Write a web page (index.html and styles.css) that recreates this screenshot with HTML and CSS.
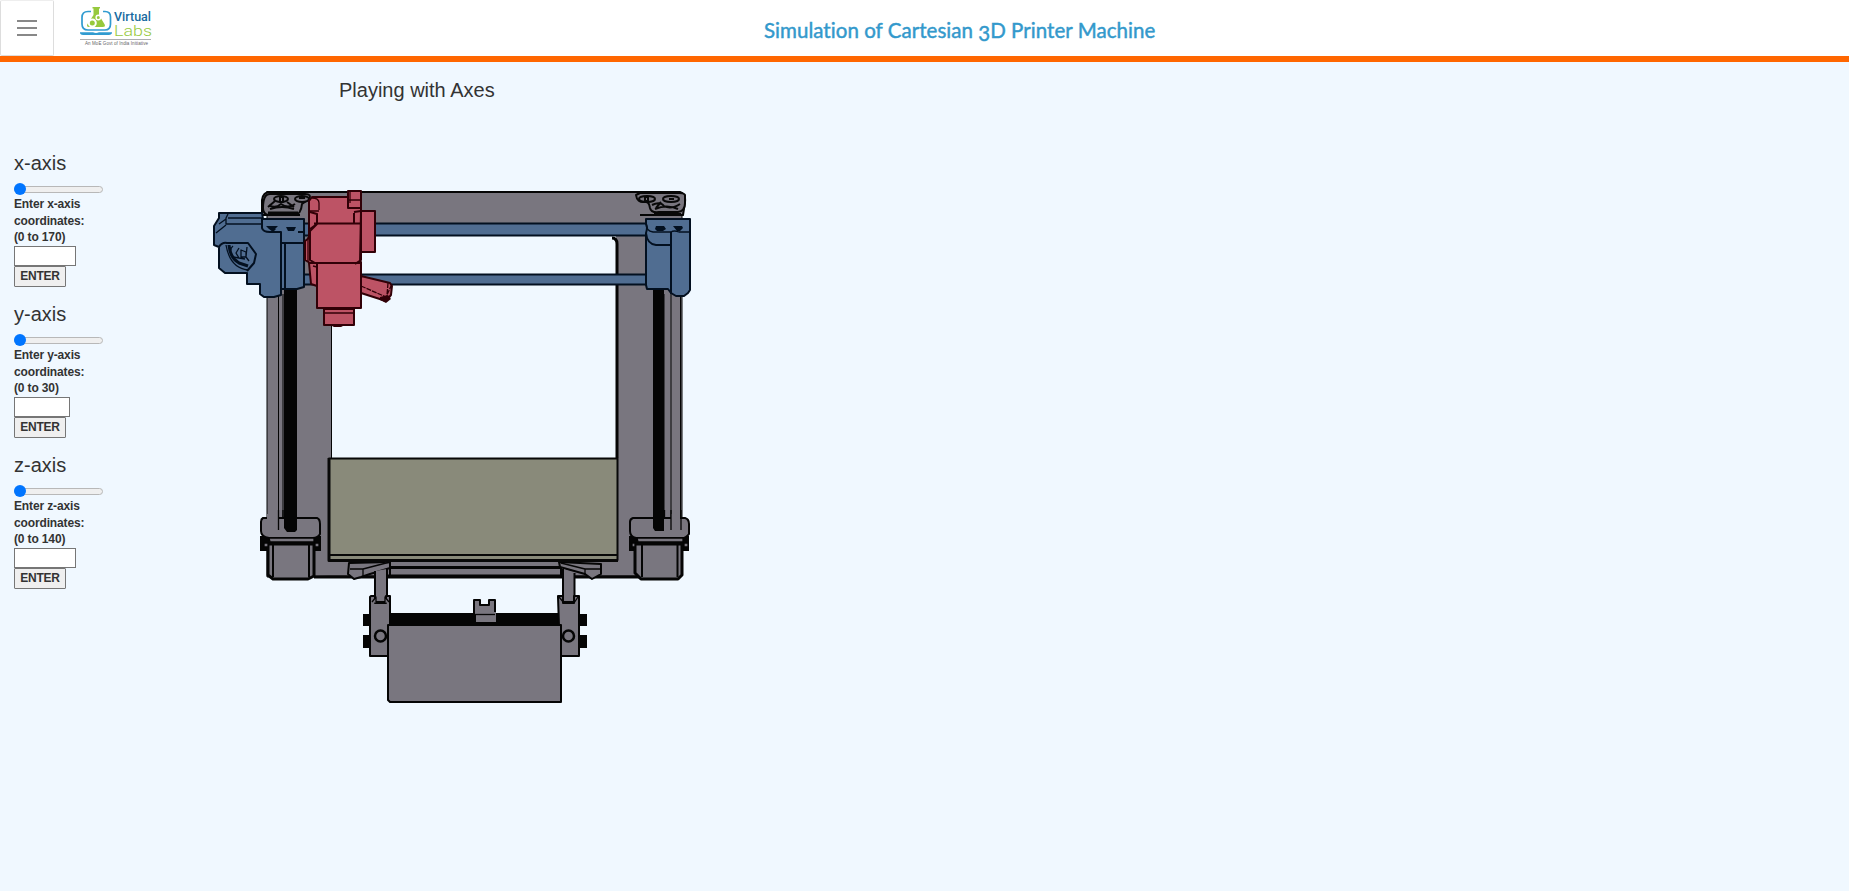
FILE: index.html
```html
<!DOCTYPE html>
<html lang="en">
<head>
<meta charset="utf-8">
<title>Simulation of Cartesian 3D Printer Machine</title>
<link rel="stylesheet" href="styles.css">
</head>
<body>
<header class="topbar">
  <button class="menu" aria-label="Menu"><span></span><span></span><span></span></button>
  <svg class="logo" viewBox="80 6 74 42" width="74" height="42" role="img" aria-label="Virtual Labs">
    <path d="M91 11.5h-3q-6 0-6 6v6.500q0 6 6 6h17q5.500 0 5.500-6v-7q0-5.500-5.500-5.500h-2" fill="none" stroke="#309bd0" stroke-width="1.700"/>
    <path d="M80 32.300h13q3 1.500 6 0h13v1q-1 1.700-3 1.700H83q-2.500 0-3-1.700z" fill="#309bd0"/>
    <path d="M92.500 7h7.500v1.500h-1v6.500l5.700 9.500q1 2.500-2 2.500H89q-3-.2-1.500-3l6-9V8.500h-1z" fill="#96c93d"/>
    <circle cx="92.300" cy="23" r="3.500" fill="#96c93d" stroke="#fff" stroke-width="2"/>
    <circle cx="98.300" cy="17.500" r="2.200" fill="#96c93d" stroke="#fff" stroke-width="1.400"/>
    <text class="logo-virtual" x="114" y="20.800" textLength="37" lengthAdjust="spacingAndGlyphs">Virtual</text>
    <text class="logo-labs" x="114" y="36" textLength="38" lengthAdjust="spacingAndGlyphs">Labs</text>
    <path d="M80 39.500h71" stroke="#999" stroke-width=".8"/>
    <text class="logo-note" x="85" y="44.800" textLength="63">An MoE Govt of India Initiative</text>
  </svg>
  <h1 class="title">Simulation of Cartesian <span class="oldstyle">3</span>D Printer Machine</h1>
</header>
<main class="content">
  <h2 class="subtitle">Playing with Axes</h2>
  <div class="workspace">
    <div class="controls">
      <section class="axis">
        <h3>x-axis</h3>
        <input class="slider" type="range" min="0" max="170" value="0">
        <label>Enter x-axis<br>coordinates:<br>(0 to 170)</label>
        <input class="value" type="text">
        <button class="enter">ENTER</button>
      </section>
      <section class="axis">
        <h3>y-axis</h3>
        <input class="slider" type="range" min="0" max="30" value="0">
        <label>Enter y-axis<br>coordinates:<br>(0 to 30)</label>
        <input class="value value-short" type="text">
        <button class="enter">ENTER</button>
      </section>
      <section class="axis">
        <h3>z-axis</h3>
        <input class="slider" type="range" min="0" max="140" value="0">
        <label>Enter z-axis<br>coordinates:<br>(0 to 140)</label>
        <input class="value" type="text">
        <button class="enter">ENTER</button>
      </section>
    </div>
    <svg class="printer" viewBox="205 180 500 530" width="500" height="530">
      <!-- frame -->
      <g class="frame">
        <path class="thin" d="M267 215V577L328 576H640L682 560V215z"/>
        <path class="thick" d="M267 192H680Q686 194 685 202L683 215H262V200Q263 192 270 192z"/>
        <path class="fill" d="M300 200H640V230H300z"/>
        <path class="hole" d="M332 235H616V458H332z"/>
        <path class="thin" d="M331.500 325V458"/>
        <path class="heavy line" d="M612 238Q617 238 617 244V458"/>
        <path class="heavy line" d="M314 577H640"/>
        <path d="M278.500 294V529M283 294V520M664 294V529M671 294V529M680.500 294V525" class="thin"/>
        <path class="solid" d="M284 290H297V530Q297 532 293 532H288Q284 531 284 522zM653 290H664V530Q664 532 660 532H655Q653 531 653 527z"/>
      </g>
      <!-- frame corner fittings -->
      <g class="fitting">
        <path class="thick" d="M263 208Q263 194 270 194H305Q312 194 309 199L302 204Q301 215 294 215H268Q263 214 263 208z"/>
        <ellipse class="thick" cx="281" cy="199" rx="7" ry="3"/><ellipse class="thick" cx="302" cy="199" rx="7" ry="3"/>
        <path class="thick" d="M280 197h3v5h-3zM299 198h6M269 205q6 4 12-1q7 5 14 0M270 209q12-4 24 0M275 201l-7 6M287 202l7 5"/>
        <path d="M268 213H298" class="heavy"/>
        <path class="thick" d="M636 195Q637 203 645 202Q649 201 650 208Q651 213 659 212H678Q685 211 685 203V195Q684 193 679 193H640z"/>
        <ellipse class="thick" cx="647" cy="199" rx="8" ry="3"/><ellipse class="thick" cx="671" cy="199" rx="8" ry="3"/>
        <path class="thick" d="M645 197h3v4h-3zM669 199h5M652 205q8-4 12 1q7 4 16-2M655 209q12-5 23 0M661 202l-5 6"/>
        <path d="M654 214.500H681" class="heavy"/>
      </g>
      <!-- lower motors -->
      <g class="frame">
        <path class="solid" d="M260 536h61v15h-61zM629 536h60v15h-60z"/>
        <path d="M268 544H314V576L308 579H273L268 575zM635 544H682V575L678 579H641L635 573z" class="heavy"/>
        <path class="thick line" d="M273 545V577M309 545V577M642 545V577M677.500 545V577"/>
        <path class="thick" d="M263 518H317Q320 519 320 524V534Q318 538 313 538H269Q261 537 261 531V522Q261 519 263 518z"/>
        <path class="thick" d="M633 518H685Q689 519 689 524V534Q686 538 682 538H636Q630 537 630 531V522Q630 519 633 518z"/>
        <path d="M269 538H314V542H270zM637 538H683V542H638z"/>
        <path d="M264 543h4v4h-4zM315 543h4v4h-4zM632 543h3v4h-3zM684 543h4v4h-4z"/>
        <path class="fill" d="M267 514H279V529H267zM671 514H680V529H671z"/>
        <path class="line" d="M278.500 510V530M283 510V518M664.500 510V518M671 510V530M681 510V530"/>
        <path class="solid" d="M284 510H297V530L295 532H287L284 528zM653 510H664V531H655L653 528z"/>
      </g>
      <!-- base rails and feet -->
      <g class="frame">
        <path d="M390 561H561V576H390z" class="thick"/>
        <path d="M390 567.500H561M388 576H563" class="heavy"/>
        <path class="thick" d="M349 563L390 562V568L370 574L361 577L354 579L348 574zM559 562L601 564V574L592 579L585 574L560 567z"/>
        <path d="M350 569H363L390 562M363 569V577M561 563L585 569H601M585 569V575"/>
        <path class="thick" d="M375 571V602H387V569M563 569V602H574.500V573"/>
        <path class="solid" d="M363 614H371V626H363zM363 635H371V648H363zM579 614H587V626H579zM579 635H587V648H579zM389 613H561V626H389z"/>
        <path class="thick" d="M371 596H375V603H386V596H390V656H370V597zM558 596H563V603H574V596H579V656H560L558 597z"/>
        <path d="M372 602L376 597V603M385 603V597L389 602M559 597L564 603M574 603L578 597"/>
        <path class="thick" d="M474 614V600H480V605H489V600H495V614"/>
        <path class="fill" d="M476 612H496V622H476z"/>
        <path d="M475 614.500H495"/>
        <path class="thick" d="M388 625H561V702H390L388 700z"/>
        <circle class="ring" cx="380.500" cy="636" r="5.500"/><circle class="ring" cx="568.500" cy="636" r="5.500"/>
      </g>
      <!-- build plate -->
      <g class="plate">
        <path class="thick" d="M329 458.500H617.500V560H329z"/>
        <path class="heavy line" d="M329 458V560.500H618"/>
        <path class="thick" d="M329 555H618"/>
      </g>
      <!-- x carriage rails and brackets -->
      <g class="blue">
        <path class="thick" d="M300 223.500H650V235.500H300zM300 274.500H650V284.500H300z"/>
        <path class="thick" d="M219 213H262L263 219H304V287L297 289H281V295L274 297H264L260 294V284H247V273H225L219 268V247L214 245V226L219 218z"/>
        <path class="line" d="M228 214L226 218V224H263M228 218H263M226 219L219 224M216 233L226 225"/>
        <path class="thick line" d="M262 218V228Q263 232 270 232H281V243H303M281 242V295M285 244V288M298 232H304"/>
        <path class="thick line" d="M219 247Q222 242 227 243H248L256 254L254 263L247 271"/>
        <path class="heavy line" d="M229 245Q230 258 239 263L248 266"/>
        <path class="line" d="M226 245Q230 268 248 270M233 246Q229 249 232 256M241 250v7h5v-5zM239 248l-3 5 3 5M247 247l-1 10 3 4M233 257l12 2"/>
        <path class="solid" d="M266 226h12l-3 3h1l-3 3-4-3zM286 227h10l-2 4h-6z"/>
        <path class="thick" d="M646 219H690V290L688 293L684 296H676L671 293L668 289H647L646 285V233Q648 227 646 224z"/>
        <path class="thick line" d="M646 233Q647 244 656 245H671M671 232V294"/>
        <path class="line" d="M646 223Q646 231 653 232H671Q674 230 679 232H690"/>
        <path class="solid" d="M656 226h8l2 3-3 2h-6l-2-2zM673 226h9l1 2-3 3h-3z"/>
      </g>
      <!-- extruder -->
      <g class="red">
        <path class="thick" d="M361 211H375V252H361z"/>
        <path class="thick" d="M361 276L390 283L392 286L391 295L386 301L361 293z"/>
        <path d="M361 286L386 297L392 284M388 283L387 295" class="dash line"/>
        <path class="solid" d="M380 297L388 295L391 299L386 303L380 300z"/>
        <path class="thick" d="M309 263H317V286L311 284z"/>
        <path class="thick" d="M317 262H361V308H317z"/>
        <path class="thick" d="M324 309H354V325H324z"/>
        <path class="line" d="M325 313H353M331 309H347"/>
        <path class="solid" d="M328 324H347L341 327H334z"/>
        <path class="thick" d="M312 197H348V191H361V211L360 263H310L305 260V241L309 238V201z"/>
        <path class="thick line" d="M348 192V208H361M314 223.500H360M310 212L317 214V224L310 229M354 212L361 211M354 213V223M318 223L310 231V260L315 263M361 223V260L355 264"/>
        <path class="line" d="M312 198Q319 198 319 203V210M310 211H319M349 200H361M350 203V191M308 237V262M313 266L317 267V282"/>
      </g>
    </svg>
  </div>
</main>
</body>
</html>
```
FILE: styles.css
```css
* { box-sizing: border-box; }
body {
  margin: 0;
  min-height: 100vh;
  background: #f0f8ff;
  color: #333;
  font-family: "Liberation Sans", Arial, sans-serif;
  overflow: hidden;
}
.topbar {
  display: flex;
  height: 62px;
  background: #fff;
  border-bottom: 6px solid #ff6600;
}
.menu {
  display: flex;
  flex-direction: column;
  align-items: center;
  gap: 5px;
  width: 54px;
  height: 56px;
  padding: 19px 1px 0 0;
  background: #fff;
  border: 1px solid #ddd;
  border-top-color: #eee;
  border-radius: 2px;
}
.menu span { width: 20px; height: 2px; background: #888; }
.logo { margin: 6px 0 0 26px; flex: none; }
.logo-virtual { font: 500 12px Roboto, sans-serif; fill: #186aa0; }
.logo-labs { font: 300 15px Roboto, sans-serif; fill: #96c93d; }
.logo-note { font: 4.5px "Liberation Sans", sans-serif; fill: #666; }
.title {
  margin: 17px 0 0 610px;
  color: #3399cc;
  font: 400 20.5px/26px Lato, sans-serif;
  letter-spacing: .04px;
  -webkit-text-stroke: .45px #3399cc;
  font-variant-ligatures: none;
  white-space: nowrap;
}
.oldstyle { display: inline-block; transform: translateY(3px); }
.content { padding: 16px 14px 0; }
.subtitle { margin: 0 0 0 325px; font-size: 20px; line-height: 24px; font-weight: 400; }
.workspace { display: flex; align-items: flex-start; padding-top: 49px; }
.controls { width: 90px; }
.axis { display: flex; flex-direction: column; align-items: flex-start; height: 151px; }
.axis h3 { margin: 0; font-size: 20px; line-height: 24px; font-weight: 400; }
.slider {
  appearance: none;
  width: 89px;
  height: 12px;
  margin: 8px 0 1px;
  background: transparent;
}
.slider::-webkit-slider-runnable-track {
  height: 7px;
  background: #efefef;
  border: 1px solid #b8b8b8;
  border-radius: 4px;
}
.slider::-webkit-slider-thumb {
  appearance: none;
  width: 12px;
  height: 12px;
  margin: -3.5px 0 0 -1px;
  background: #0075ff;
  border-radius: 50%;
}
.axis label { font-size: 12px; line-height: 16.7px; font-weight: 700; letter-spacing: -.14px; white-space: nowrap; }
.value { width: 62px; height: 20px; padding: 1px 2px; background: #fff; border: 1px solid #767676; }
.value-short { width: 56px; }
.enter {
  width: 52px;
  height: 21px;
  padding: 0 0 1px;
  color: #333;
  background: #efefef;
  border: 1px solid #767676;
  border-radius: 1px;
  font: bold 12px "Liberation Sans", Arial, sans-serif;
  letter-spacing: -.2px;
}
.printer { flex: none; margin: 29px 0 0 101px; }
.printer path, .printer circle, .printer ellipse { stroke-linejoin: round; }
.printer g { stroke-width: 1.3; }
.frame { fill: #79767f; stroke: #050505; }
.fitting { fill: #79767f; stroke: #080808; }
.plate { fill: #898a7a; stroke: #080808; }
.blue { fill: #506d91; stroke: #031020; }
.red { fill: #bd5365; stroke: #310007; }
.printer .thin { stroke-width: 1; }
.printer .thick { stroke-width: 2; }
.printer .ring { stroke-width: 2.5; }
.printer .heavy { stroke-width: 3; }
.printer .line { fill: none; }
.printer .hole { fill: #f0f8ff; stroke: none; }
.printer .solid { fill: #050505; stroke: none; }
.printer .fill { stroke: none; }
.printer .blue .solid { fill: #031020; }
.printer .red .solid { fill: #310007; }
.red .dash { stroke-dasharray: 5 1; }
```
